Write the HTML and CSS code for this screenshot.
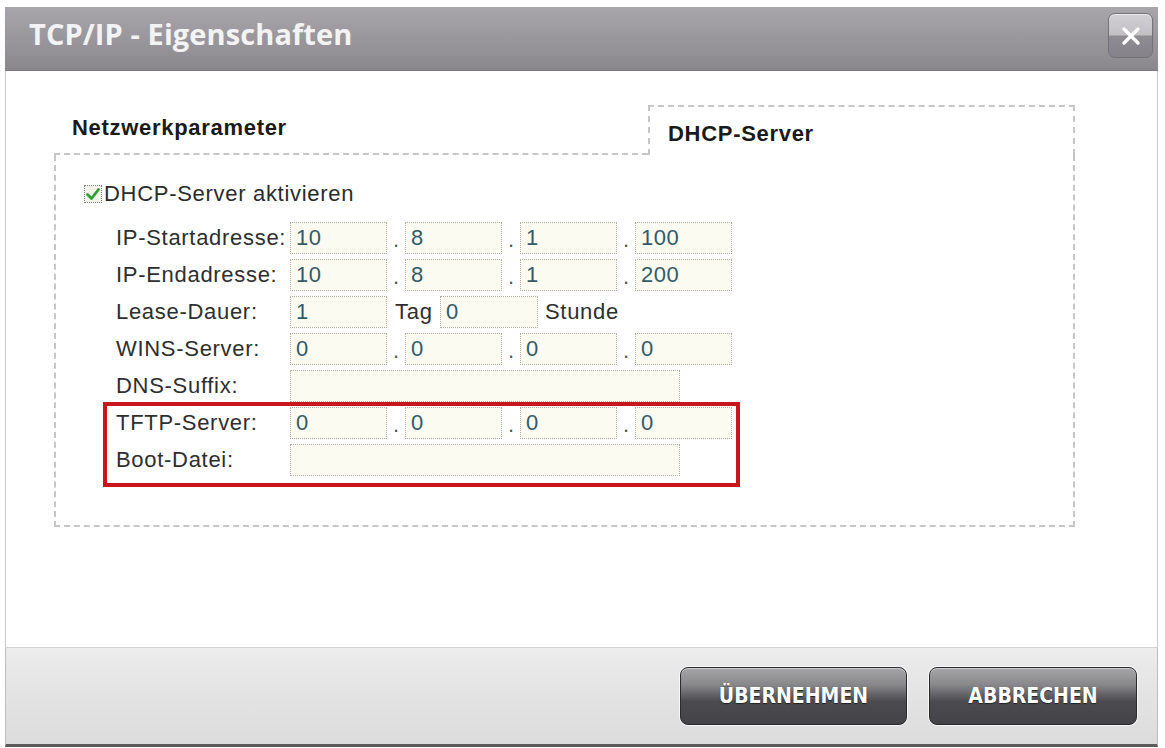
FILE: index.html
```html
<!DOCTYPE html>
<html lang="de">
<head>
<meta charset="utf-8">
<title>TCP/IP - Eigenschaften</title>
<link rel="stylesheet" href="styles.css">
</head>
<body>
<div class="dialog">
  <div class="titlebar">
    <span class="title">TCP/IP - Eigenschaften</span>
    <button class="close" aria-label="Schließen">
      <svg width="22" height="22" viewBox="0 0 22 22"><path d="M4 4 L18 18 M18 4 L4 18" stroke="#fff" stroke-width="3.4" stroke-linecap="round" fill="none"/></svg>
    </button>
  </div>
  <div class="body">
    <div class="tabs">
      <div class="tab tab-inactive">Netzwerkparameter</div>
      <div class="tab tab-active">DHCP-Server</div>
    </div>
    <div class="panel">
      <div class="check-row">
        <span class="checkbox">
          <svg width="16" height="16" viewBox="0 0 16 16"><path d="M2.5 8.5 L6.5 12.5 L13.5 3.5" stroke="#2f9e36" stroke-width="2.8" fill="none" stroke-linecap="round" stroke-linejoin="round"/></svg>
        </span>
        <span>DHCP-Server aktivieren</span>
      </div>
      <div class="form">
        <div class="row">
          <span class="lbl">IP-Startadresse:</span>
          <div class="ip"><span class="in">10</span><span class="dot">.</span><span class="in">8</span><span class="dot">.</span><span class="in">1</span><span class="dot">.</span><span class="in">100</span></div>
        </div>
        <div class="row">
          <span class="lbl">IP-Endadresse:</span>
          <div class="ip"><span class="in">10</span><span class="dot">.</span><span class="in">8</span><span class="dot">.</span><span class="in">1</span><span class="dot">.</span><span class="in">200</span></div>
        </div>
        <div class="row">
          <span class="lbl">Lease-Dauer:</span>
          <div class="ip"><span class="in">1</span><span class="unit">Tag</span><span class="in in-short">0</span><span class="unit2">Stunde</span></div>
        </div>
        <div class="row">
          <span class="lbl">WINS-Server:</span>
          <div class="ip"><span class="in">0</span><span class="dot">.</span><span class="in">0</span><span class="dot">.</span><span class="in">0</span><span class="dot">.</span><span class="in">0</span></div>
        </div>
        <div class="row row-last">
          <span class="lbl">DNS-Suffix:</span>
          <div class="ip"><span class="in in-wide"></span></div>
        </div>
        <div class="highlight">
          <div class="row">
            <span class="lbl">TFTP-Server:</span>
            <div class="ip"><span class="in">0</span><span class="dot">.</span><span class="in">0</span><span class="dot">.</span><span class="in">0</span><span class="dot">.</span><span class="in">0</span></div>
          </div>
          <div class="row">
            <span class="lbl">Boot-Datei:</span>
            <div class="ip"><span class="in in-wide"></span></div>
          </div>
        </div>
      </div>
    </div>
  </div>
  <div class="footer">
    <button class="btn btn-apply">ÜBERNEHMEN</button>
    <button class="btn btn-cancel">ABBRECHEN</button>
  </div>
</div>
</body>
</html>
```
FILE: styles.css
```css
html, body {
  margin: 0;
  padding: 0;
  background: #ffffff;
}
body {
  font-family: "Liberation Sans", Arial, sans-serif;
  color: #2b2b2b;
}
.dialog {
  margin: 7px 0 0 5px;
  width: 1153px;
  display: flex;
  flex-direction: column;
}
.titlebar {
  height: 64px;
  box-sizing: border-box;
  background: linear-gradient(to bottom, #a9a6ab 0%, #9a979c 50%, #8b888d 100%);
  border-bottom: 1px solid #7c797e;
  display: flex;
  justify-content: space-between;
  align-items: flex-start;
  padding: 0 5px 0 24px;
}
.title {
  font-family: "Open Sans", "DejaVu Sans", sans-serif;
  font-weight: 700;
  font-size: 29px;
  line-height: 40px;
  margin-top: 7px;
  color: #f3f3f3;
  letter-spacing: 0.1px;
}
.close {
  margin-top: 6px;
  width: 45px;
  height: 45px;
  padding: 0;
  border: 1px solid #747077;
  border-radius: 7px;
  background: linear-gradient(to bottom, #d2d0d4 0%, #c2c0c4 48%, #8f8b93 52%, #86828a 100%);
  display: flex;
  align-items: center;
  justify-content: center;
  box-shadow: inset 0 1px 0 rgba(255,255,255,0.5);
}
.body {
  height: 576px;
  box-sizing: border-box;
  background: #ffffff;
  border-left: 1px solid #c9c9c9;
  border-right: 1px solid #c9c9c9;
  padding: 34px 82px 0 48px;
}
.tabs {
  display: grid;
  grid-template-columns: 594px 1fr;
  height: 50px;
}
.tab {
  font-weight: 700;
  font-size: 22px;
  letter-spacing: 0.7px;
  color: #1a1a1a;
  display: flex;
  align-items: center;
  padding-left: 18px;
  box-sizing: border-box;
}
.tab-inactive {
  border-bottom: 2px dashed #c6c6c6;
  padding-bottom: 2px;
}
.tab-active {
  border: 2px dashed #c6c6c6;
  border-bottom: none;
  padding-top: 6px;
}
.panel {
  height: 372px;
  box-sizing: border-box;
  border: 2px dashed #c6c6c6;
  border-top: none;
  padding: 28px 0 0 28px;
}
.check-row {
  display: flex;
  align-items: center;
  height: 22px;
  font-size: 22px;
  letter-spacing: 0.7px;
  color: #2b2b2b;
}
.checkbox {
  width: 18px;
  height: 18px;
  box-sizing: border-box;
  border: 1px dotted #7e7e7e;
  background: #f3f3ea;
  display: flex;
  align-items: center;
  justify-content: center;
  margin-right: 2px;
}
.form {
  margin: 17px 0 0 32px;
  display: flex;
  flex-direction: column;
  gap: 5px;
}
.row {
  display: flex;
  align-items: center;
  height: 32px;
}
.row-last {
  margin-bottom: -5px;
}
.lbl {
  width: 174px;
  flex: none;
  font-size: 22px;
  letter-spacing: 0.7px;
  color: #2e2e2e;
  white-space: nowrap;
}
.ip {
  display: flex;
  align-items: stretch;
  height: 32px;
}
.in {
  width: 97px;
  height: 32px;
  box-sizing: border-box;
  border: 1px dotted #aeaea6;
  background: #fbfbf1;
  font-size: 22px;
  letter-spacing: 0.5px;
  color: #345a68;
  padding-left: 5px;
  line-height: 30px;
}
.in-short {
  width: 98px;
}
.in-wide {
  width: 390px;
}
.dot {
  width: 18px;
  text-align: center;
  font-size: 22px;
  line-height: 36px;
  color: #555;
}
.unit {
  width: 53px;
  box-sizing: border-box;
  padding-left: 8px;
  font-size: 22px;
  letter-spacing: 0.7px;
  line-height: 32px;
  color: #2e2e2e;
}
.unit2 {
  padding-left: 7px;
  font-size: 22px;
  letter-spacing: 0.7px;
  line-height: 32px;
  color: #2e2e2e;
}
.highlight {
  margin: 0 0 0 -13px;
  width: 637px;
  box-sizing: border-box;
  border: 4px solid #c9161d;
  padding: 1px 0 7px 9px;
  display: flex;
  flex-direction: column;
  gap: 5px;
}
.footer {
  height: 100px;
  box-sizing: border-box;
  background: linear-gradient(to bottom, #ececec 0%, #e3e3e3 50%, #dcdcdc 100%);
  border-top: 1px solid #d2d2d2;
  border-left: 1px solid #bdbdbd;
  border-right: 1px solid #bdbdbd;
  border-bottom: 3px solid #5a5a5a;
  display: flex;
  justify-content: flex-end;
  align-items: flex-start;
  padding: 19px 20px 0 0;
  gap: 22px;
}
.btn {
  height: 58px;
  border: 1px solid #2a2a2c;
  border-radius: 8px;
  background: linear-gradient(to bottom, #a6a6a9 0%, #88888b 30%, #5e5e62 50%, #4b4b4f 60%, #444448 100%);
  box-shadow: 0 0 0 1px rgba(255,255,255,0.7), inset 0 1px 0 rgba(255,255,255,0.45);
  color: #ffffff;
  font-family: "DejaVu Sans Condensed", "DejaVu Sans", sans-serif;
  font-stretch: condensed;
  font-weight: 700;
  font-size: 21px;
  text-shadow: 0 1px 1px #222;
  padding: 0;
}
.btn-apply {
  width: 227px;
}
.btn-cancel {
  width: 208px;
}
```
